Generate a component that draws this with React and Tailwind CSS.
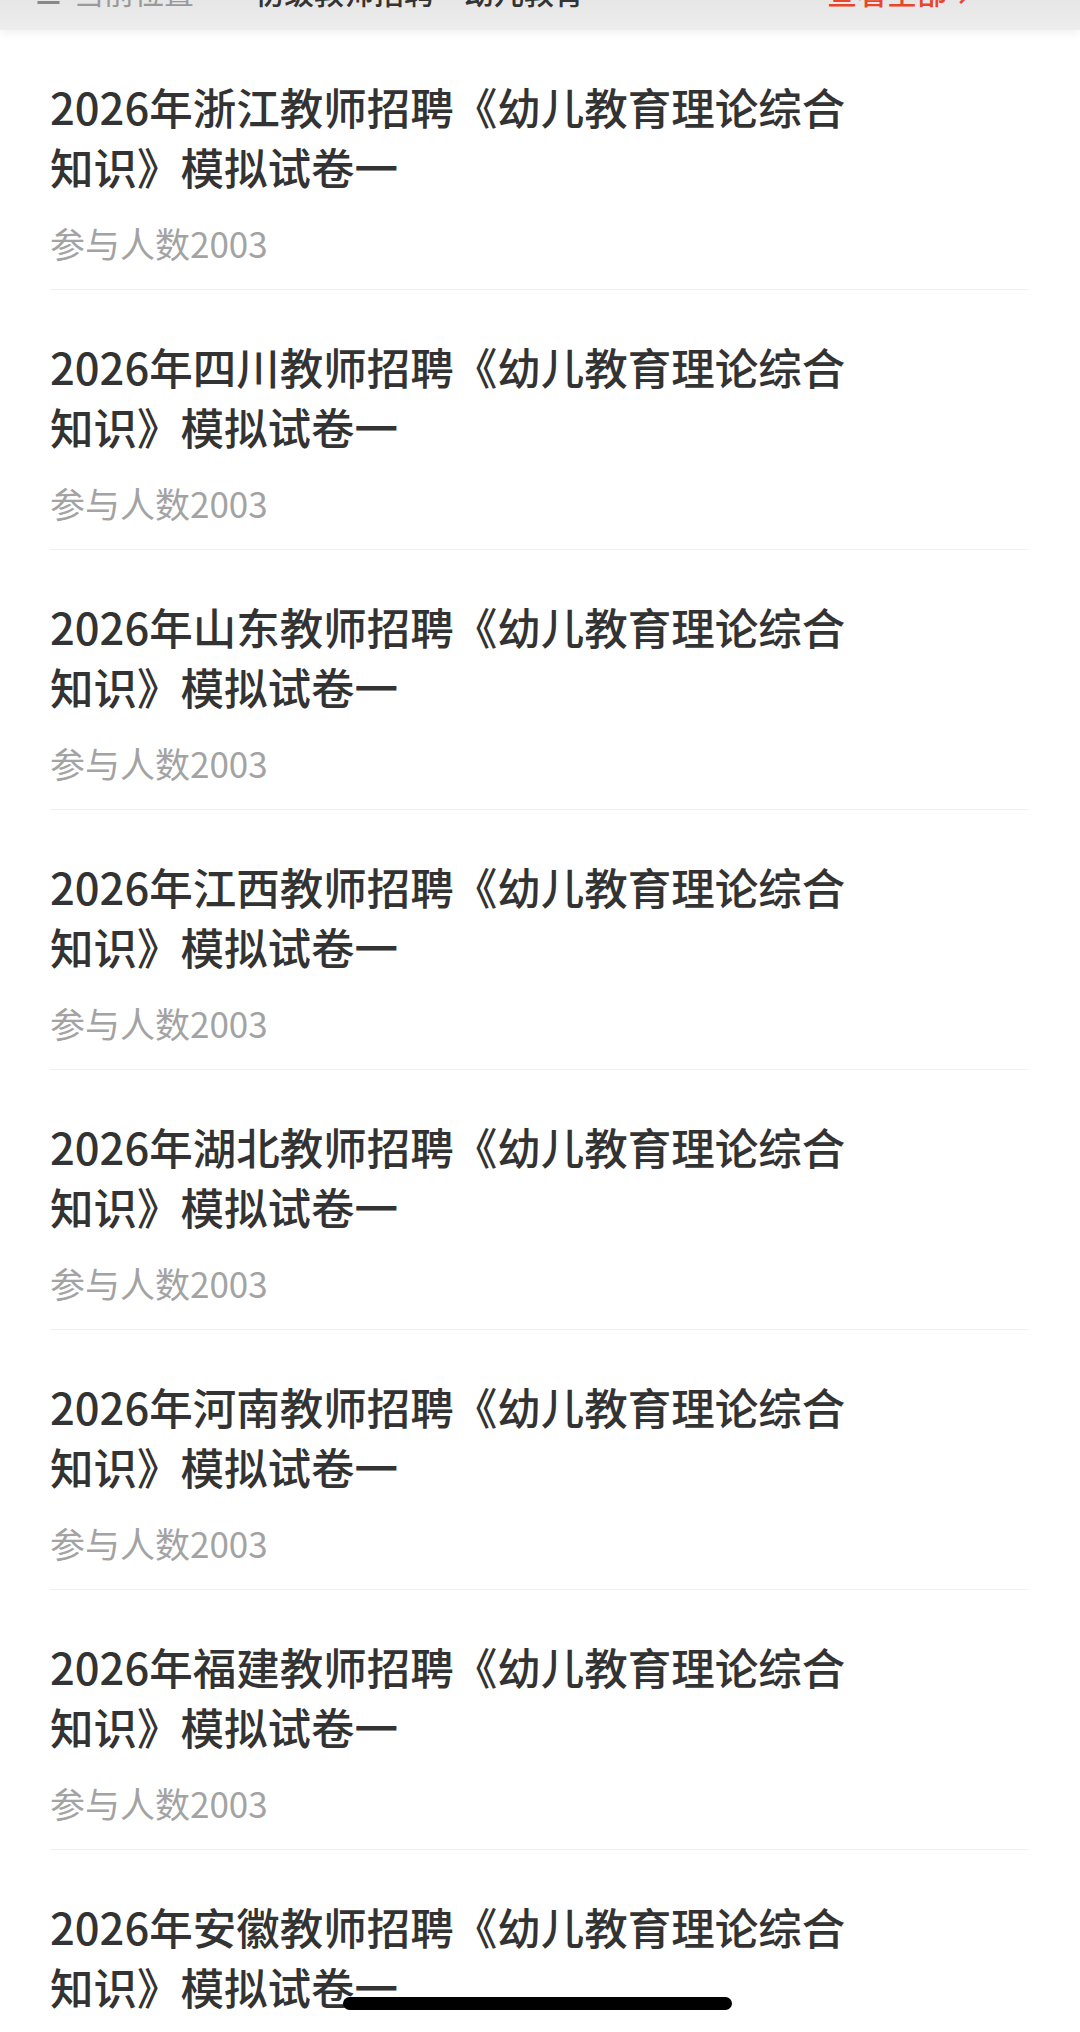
import React from "react";

const provinces = ["浙江", "四川", "山东", "江西", "湖北", "河南", "福建", "安徽"];

function Item({ p }) {
  return (
    <div className="pt-[47px] pb-[26px] border-b border-[#f0f0f0]">
      <div className="w-[810px] text-[43.5px] leading-[60px] text-[#333333] font-medium">
        2026年{p}教师招聘《幼儿教育理论综合知识》模拟试卷一
      </div>
      <div className="mt-[26px] text-[35px] leading-[40px] text-[#a3a3a3]">参与人数2003</div>
    </div>
  );
}

export default function App() {
  return (
    <div
      className="relative w-[1080px] h-[2032px] overflow-hidden bg-white"
      style={{ fontFamily: '"PingFang SC", "Noto Sans CJK SC", "Noto Sans", sans-serif' }}
    >
      <div className="h-[30px] overflow-hidden bg-gradient-to-b from-[#e6e6e6] to-[#ededed] shadow-[0_4px_8px_rgba(0,0,0,0.05)] relative z-10">
        <div className="flex items-end h-[30px] -mt-[24px] px-[35px] text-[30px] leading-[30px]">
          <div className="flex items-end gap-3">
            <span className="text-[#888]">☰</span>
            <span className="text-[#999]">当前位置</span>
          </div>
          <div className="ml-[60px] text-[#333] font-medium">初级教师招聘·幼儿教育</div>
          <div className="ml-auto mr-[60px] text-[#e8452c] font-medium flex items-end gap-2">
            查看全部<span className="text-[#e8452c]">↗</span>
          </div>
        </div>
      </div>
      <div className="pl-[50px] pr-[52px]">
        {provinces.map((p) => (
          <Item key={p} p={p} />
        ))}
      </div>
      <div className="absolute left-[343px] top-[1997px] w-[389px] h-[13px] rounded-full bg-black" />
    </div>
  );
}
